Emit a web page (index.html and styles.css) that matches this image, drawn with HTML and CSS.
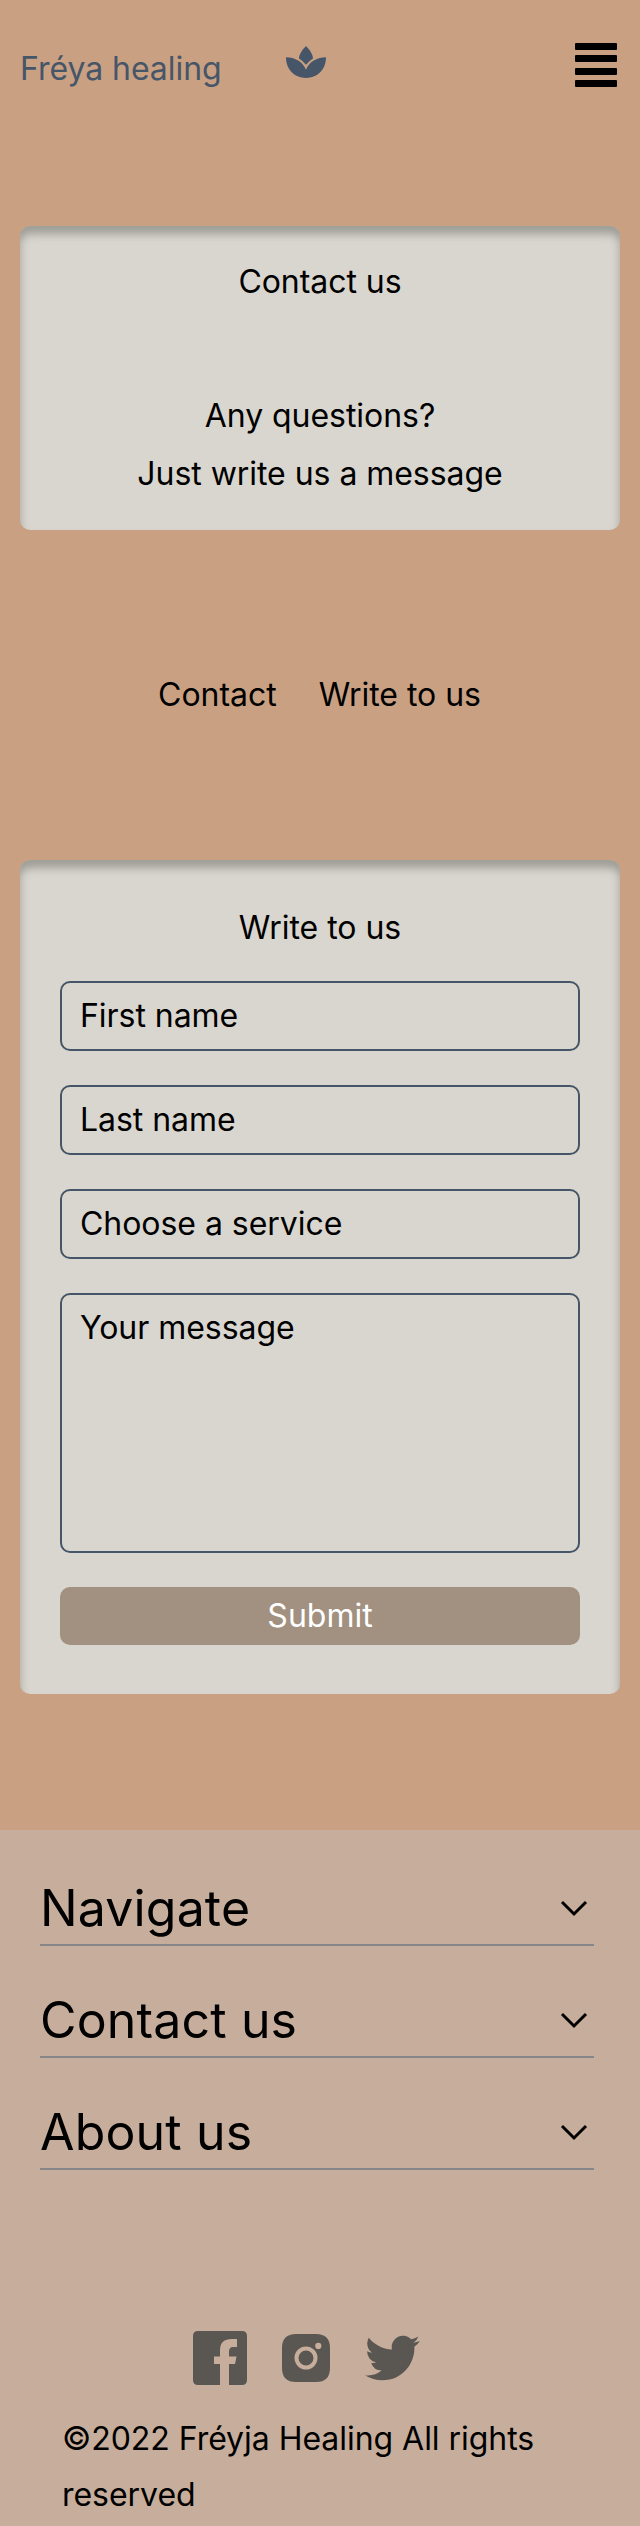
FILE: index.html
```html
<!DOCTYPE html>
<html lang="en">
<head>
<meta charset="utf-8">
<title>Fréya healing</title>
<link rel="stylesheet" href="styles.css">
</head>
<body>
<header class="header">
  <a class="brand">Fréya healing</a>
  <svg class="leaf" viewBox="0 0 40 32"><path d="M20 0C24.5 4.5 27 9 27 12.5Q23 15 20 18.800Q17 15 13 12.500C13 9 15.500 4.500 20 0ZM0 11.300C9 11.300 17 16 20 23.700C23 16 31 11.300 40 11.300C40 23 32 32 20 32C8 32 0 23 0 11.300Z"/></svg>
  <div class="burger"><span></span><span></span><span></span><span></span></div>
</header>
<main>
  <section class="card intro">
    <h1>Contact us</h1>
    <p>Any questions?<br>Just write us a message</p>
  </section>
  <nav class="tabs"><a>Contact</a><a>Write to us</a></nav>
  <section class="card form">
    <h2>Write to us</h2>
    <div class="field">First name</div>
    <div class="field">Last name</div>
    <div class="field">Choose a service</div>
    <div class="field message">Your message</div>
    <button class="submit" type="button">Submit</button>
  </section>
</main>
<footer class="footer">
  <div class="row"><span>Navigate</span><svg class="chevron" viewBox="0 0 28 18"><path d="M2 3L14 15L26 3"/></svg></div>
  <div class="row"><span>Contact us</span><svg class="chevron" viewBox="0 0 28 18"><path d="M2 3L14 15L26 3"/></svg></div>
  <div class="row"><span>About us</span><svg class="chevron" viewBox="0 0 28 18"><path d="M2 3L14 15L26 3"/></svg></div>
  <div class="social">
    <svg class="facebook" viewBox="0 0 54 54"><path d="M5 0H49Q54 0 54 5V49Q54 54 49 54H36V33H42L43.500 25.500H36V20.500Q36 16 40 16H44V8H39Q27 8 27 19V25.500H21V33H27V54H5Q0 54 0 49V5Q0 0 5 0Z"/></svg>
    <svg class="instagram" viewBox="0 0 48 48"><path fill-rule="evenodd" d="M14 0H34Q48 0 48 14V34Q48 48 34 48H14Q0 48 0 34V14Q0 0 14 0ZM24 12.500A11.500 11.500 0 1 0 24 35.500A11.500 11.500 0 1 0 24 12.500ZM24 16.500A7.500 7.500 0 1 1 24 31.500A7.500 7.500 0 1 1 24 16.500ZM36.300 8.800A3.100 3.100 0 1 0 36.300 15A3.100 3.100 0 1 0 36.300 8.800Z"/></svg>
    <svg class="twitter" viewBox="0 0 24 19.500"><path d="M23.950 2.320a10 10 0 0 1-2.820.770 4.960 4.960 0 0 0 2.160-2.720c-.950.550-2 .950-3.130 1.180a4.920 4.920 0 0 0-8.380 4.480C7.690 5.840 4.070 3.880 1.640.900a4.820 4.820 0 0 0-.670 2.470c0 1.710.870 3.210 2.190 4.100a4.900 4.900 0 0 1-2.230-.620v.060a4.920 4.920 0 0 0 3.950 4.830 5 5 0 0 1-2.210.080 4.940 4.940 0 0 0 4.600 3.420A9.870 9.870 0 0 1 0 17.290a13.990 13.990 0 0 0 7.560 2.210c9.050 0 14-7.500 14-13.990 0-.210 0-.420-.020-.630a9.940 9.940 0 0 0 2.410-2.560z"/></svg>
  </div>
  <p class="copy">©2022 Fréyja Healing All rights reserved</p>
</footer>
</body>
</html>
```
FILE: styles.css
```css
* { box-sizing: border-box; }
body {
  margin: 0;
  background: #c9a182;
  color: #000;
  font: 400 32px/58px Inter, sans-serif;
  letter-spacing: -.04px;
}
h1, h2, p { margin: 0; font-size: inherit; font-weight: 400; }
svg { display: block; }

.header { display: flex; height: 226px; padding: 0 23px 0 20px; }
.brand { width: 266px; padding-top: 40px; color: #475569; }
.leaf { width: 40px; height: 32px; margin-top: 46px; fill: #475569; }
.burger {
  display: flex;
  flex-direction: column;
  justify-content: space-between;
  width: 42px;
  height: 44px;
  margin: 43px 0 0 auto;
}
.burger span { height: 7px; border-radius: 1px; background: #000; }

.card {
  margin: 0 20px;
  border-radius: 10px;
  background: #d9d6cf;
  box-shadow: inset 0 8px 8px rgba(71, 75, 70, .4);
}
.intro { height: 304px; padding-top: 27px; text-align: center; }
.intro p { margin-top: 76px; }
.tabs { display: flex; justify-content: center; gap: 42px; height: 330px; padding: 136px 1px 0 0; }

.form { height: 834px; padding: 39px 40px 0; }
.form h2 { height: 82px; text-align: center; }
.field {
  height: 70px;
  margin-bottom: 34px;
  padding: 4px 18px;
  border: 2px solid #475569;
  border-radius: 10px;
}
.message { height: 260px; }
.submit {
  display: block;
  width: 100%;
  height: 58px;
  padding: 0;
  border: 0;
  border-radius: 10px;
  background: #a29080;
  color: #fff;
  font: inherit;
}

.footer { height: 696px; margin-top: 136px; padding: 40px 46px 0 40px; background: #c7ae9c; }
.row {
  display: flex;
  justify-content: space-between;
  height: 76px;
  margin-bottom: 36px;
  padding-right: 6px;
  border-bottom: 2px solid #84868a;
  font-size: 50px;
  line-height: 76px;
  letter-spacing: .15px;
}
.chevron { width: 28px; height: 18px; margin-top: 29px; fill: none; stroke: #000; stroke-width: 3; }
.social { display: flex; align-items: flex-start; padding: 125px 0 0 153px; fill: #5a5753; }
.facebook { width: 54px; height: 54px; }
.instagram { width: 48px; height: 48px; margin: 3px 0 0 35px; }
.twitter { width: 55px; height: 46px; margin: 4px 0 0 35px; }
.copy { margin-top: 26px; padding-left: 22px; line-height: 56px; }
```
